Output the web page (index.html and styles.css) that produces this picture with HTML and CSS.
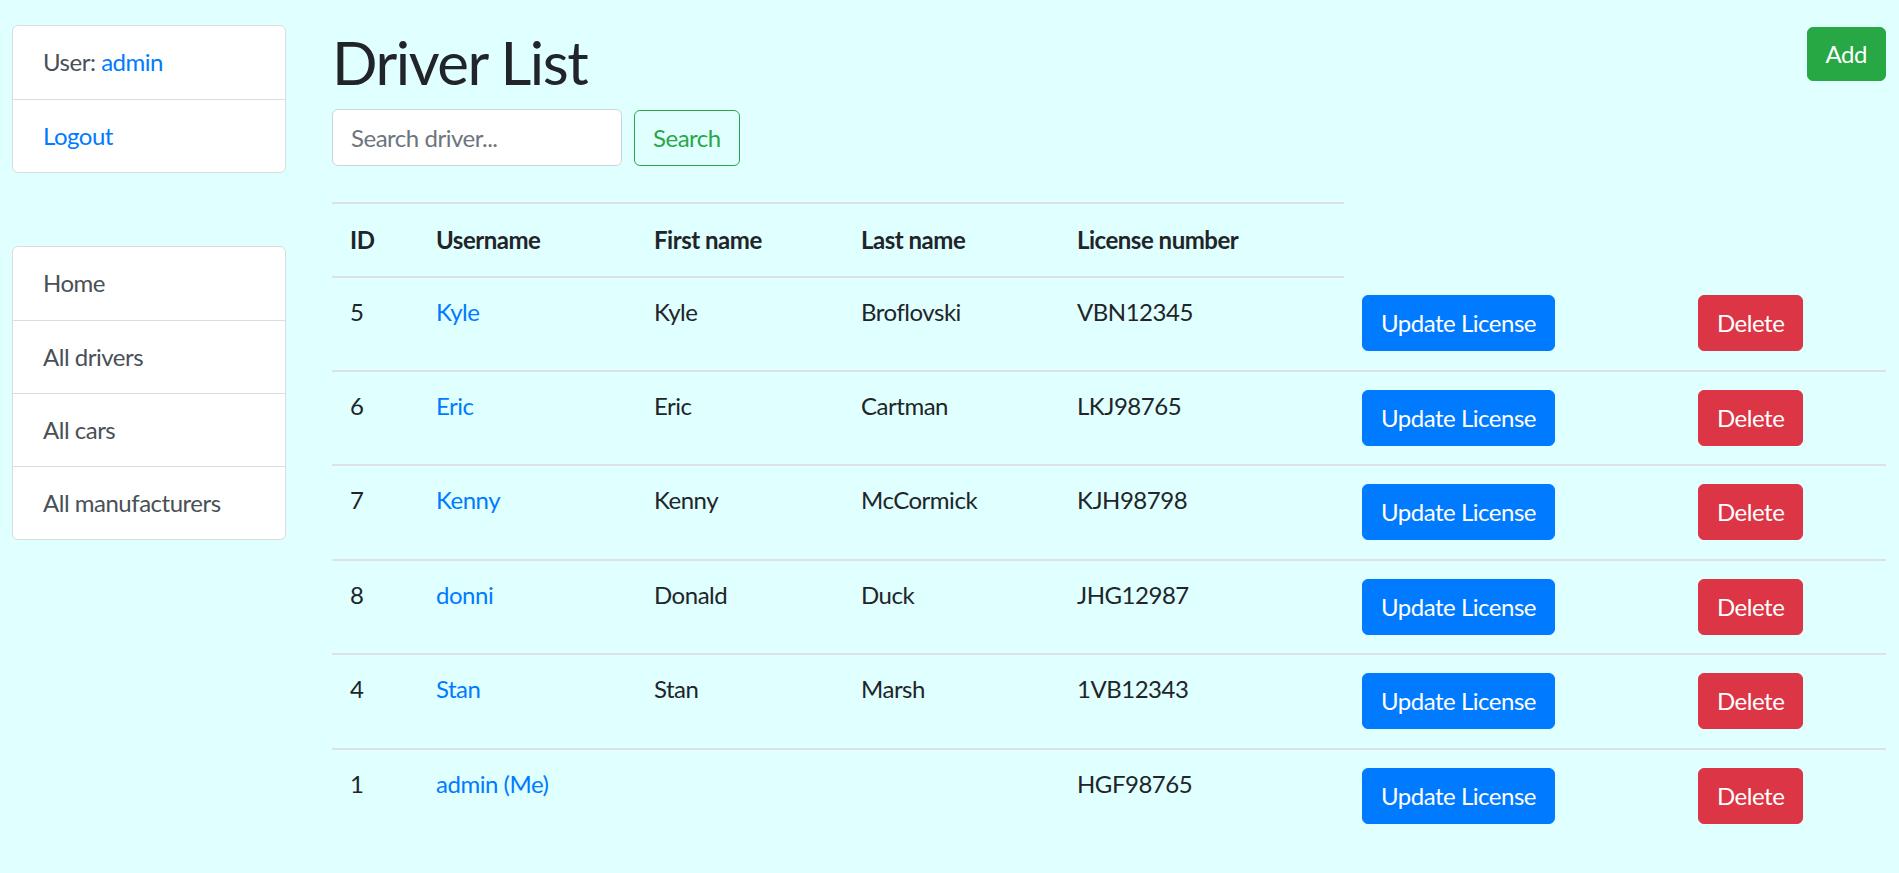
FILE: index.html
```html
<!DOCTYPE html>
<html lang="en">
<head>
<meta charset="utf-8">
<title>Driver List</title>
<link rel="stylesheet" href="styles.css">
</head>
<body>
<div class="page">
  <aside class="sidebar">
    <ul class="list-group">
      <li class="list-item">User: <a href="#">admin</a></li>
      <li class="list-item"><a href="#">Logout</a></li>
    </ul>
    <ul class="list-group nav-group">
      <li class="list-item nav-item">Home</li>
      <li class="list-item nav-item">All drivers</li>
      <li class="list-item nav-item">All cars</li>
      <li class="list-item nav-item">All manufacturers</li>
    </ul>
  </aside>
  <main class="main">
    <div class="title-row">
      <h1 class="title">Driver List</h1>
      <button class="btn btn-success">Add</button>
    </div>
    <form class="search-form">
      <input class="search-input" type="text" placeholder="Search driver...">
      <button class="btn btn-outline-success" type="button">Search</button>
    </form>
    <table class="table">
      <colgroup>
        <col class="c-id"><col class="c-user"><col class="c-first"><col class="c-last"><col class="c-lic"><col class="c-upd"><col class="c-del">
      </colgroup>
      <thead>
        <tr><th>ID</th><th>Username</th><th>First name</th><th>Last name</th><th>License number</th></tr>
      </thead>
      <tbody>
        <tr><td>5</td><td><a href="#">Kyle</a></td><td>Kyle</td><td>Broflovski</td><td>VBN12345</td><td><button class="btn btn-primary">Update License</button></td><td><button class="btn btn-danger">Delete</button></td></tr>
        <tr><td>6</td><td><a href="#">Eric</a></td><td>Eric</td><td>Cartman</td><td>LKJ98765</td><td><button class="btn btn-primary">Update License</button></td><td><button class="btn btn-danger">Delete</button></td></tr>
        <tr><td>7</td><td><a href="#">Kenny</a></td><td>Kenny</td><td>McCormick</td><td>KJH98798</td><td><button class="btn btn-primary">Update License</button></td><td><button class="btn btn-danger">Delete</button></td></tr>
        <tr><td>8</td><td><a href="#">donni</a></td><td>Donald</td><td>Duck</td><td>JHG12987</td><td><button class="btn btn-primary">Update License</button></td><td><button class="btn btn-danger">Delete</button></td></tr>
        <tr><td>4</td><td><a href="#">Stan</a></td><td>Stan</td><td>Marsh</td><td>1VB12343</td><td><button class="btn btn-primary">Update License</button></td><td><button class="btn btn-danger">Delete</button></td></tr>
        <tr><td>1</td><td><a href="#">admin (Me)</a></td><td></td><td></td><td>HGF98765</td><td><button class="btn btn-primary">Update License</button></td><td><button class="btn btn-danger">Delete</button></td></tr>
      </tbody>
    </table>
  </main>
</div>
</body>
</html>
```

FILE: styles.css
```css
* { box-sizing: border-box; }
html, body { margin: 0; padding: 0; }
body {
  background: #e0ffff;
  font-family: Lato, "Open Sans", sans-serif;
  font-size: 24px;
  line-height: 36px;
  letter-spacing: -0.02em;
  color: #212529;
}
a { color: #007bff; text-decoration: none; }

.page {
  display: flex;
  align-items: flex-start;
  padding: 25px 13px 0 12px;
}

.sidebar {
  width: 274px;
  flex: none;
  display: flex;
  flex-direction: column;
  gap: 73px;
}
.list-group {
  list-style: none;
  margin: 0;
  padding: 0;
  background: #fff;
  border: 1px solid #dcdcdc;
  border-radius: 6px;
}
.list-item {
  padding: 18px 30px;
  border-top: 1px solid #dcdcdc;
  line-height: 36px;
}
.list-item:first-child { border-top: none; padding-bottom: 19px; }
.nav-item { color: #495057; }
.list-group > .list-item:first-child { color: #495057; }

.main {
  margin-left: 46px;
  flex: 1;
  padding-top: 2px;
}
.title-row {
  display: flex;
  justify-content: space-between;
  align-items: flex-start;
}
.title {
  margin: 0 0 12px;
  font-size: 60px;
  line-height: 70px;
  font-weight: 400;
  letter-spacing: -0.025em;
}

.btn {
  font-family: inherit;
  font-size: 24px;
  line-height: 36px;
  letter-spacing: -0.02em;
  padding: 9px 18px;
  border: 1.5px solid transparent;
  border-radius: 6px;
  color: #fff;
  cursor: pointer;
}
.btn-success { background: #28a745; border-color: #28a745; padding: 8px 18px; }
.btn-primary { background: #007bff; border-color: #007bff; }
.btn-danger { background: #dc3545; border-color: #dc3545; }
.btn-outline-success { background: transparent; border-color: #28a745; color: #28a745; }

.search-form {
  display: flex;
  align-items: center;
  gap: 12px;
  margin: 0 0 36px;
}
.search-input {
  width: 290px;
  height: 57px;
  font-family: inherit;
  font-size: 24px;
  letter-spacing: -0.02em;
  padding: 9px 18px;
  border: 1.5px solid #ced4da;
  border-radius: 6px;
  background: #fff;
  color: #495057;
}
.search-input::placeholder { color: #6c757d; }

.table {
  width: 100%;
  border-collapse: collapse;
  table-layout: fixed;
}
.c-id { width: 86px; }
.c-user { width: 218px; }
.c-first { width: 207px; }
.c-last { width: 216px; }
.c-lic { width: 285px; }
.c-upd { width: 336px; }
.c-del { width: 206px; }
.table th {
  text-align: left;
  font-weight: 700;
  padding: 18px;
  border-top: 2px solid #dee2e6;
  border-bottom: 2px solid #dee2e6;
  vertical-align: bottom;
}
.table td {
  padding: 18px 18px 18.5px;
  vertical-align: top;
  line-height: 32px;
  border-top: 2px solid #dee2e6;
}
.table tbody tr:first-child td { border-top: none; }
```
